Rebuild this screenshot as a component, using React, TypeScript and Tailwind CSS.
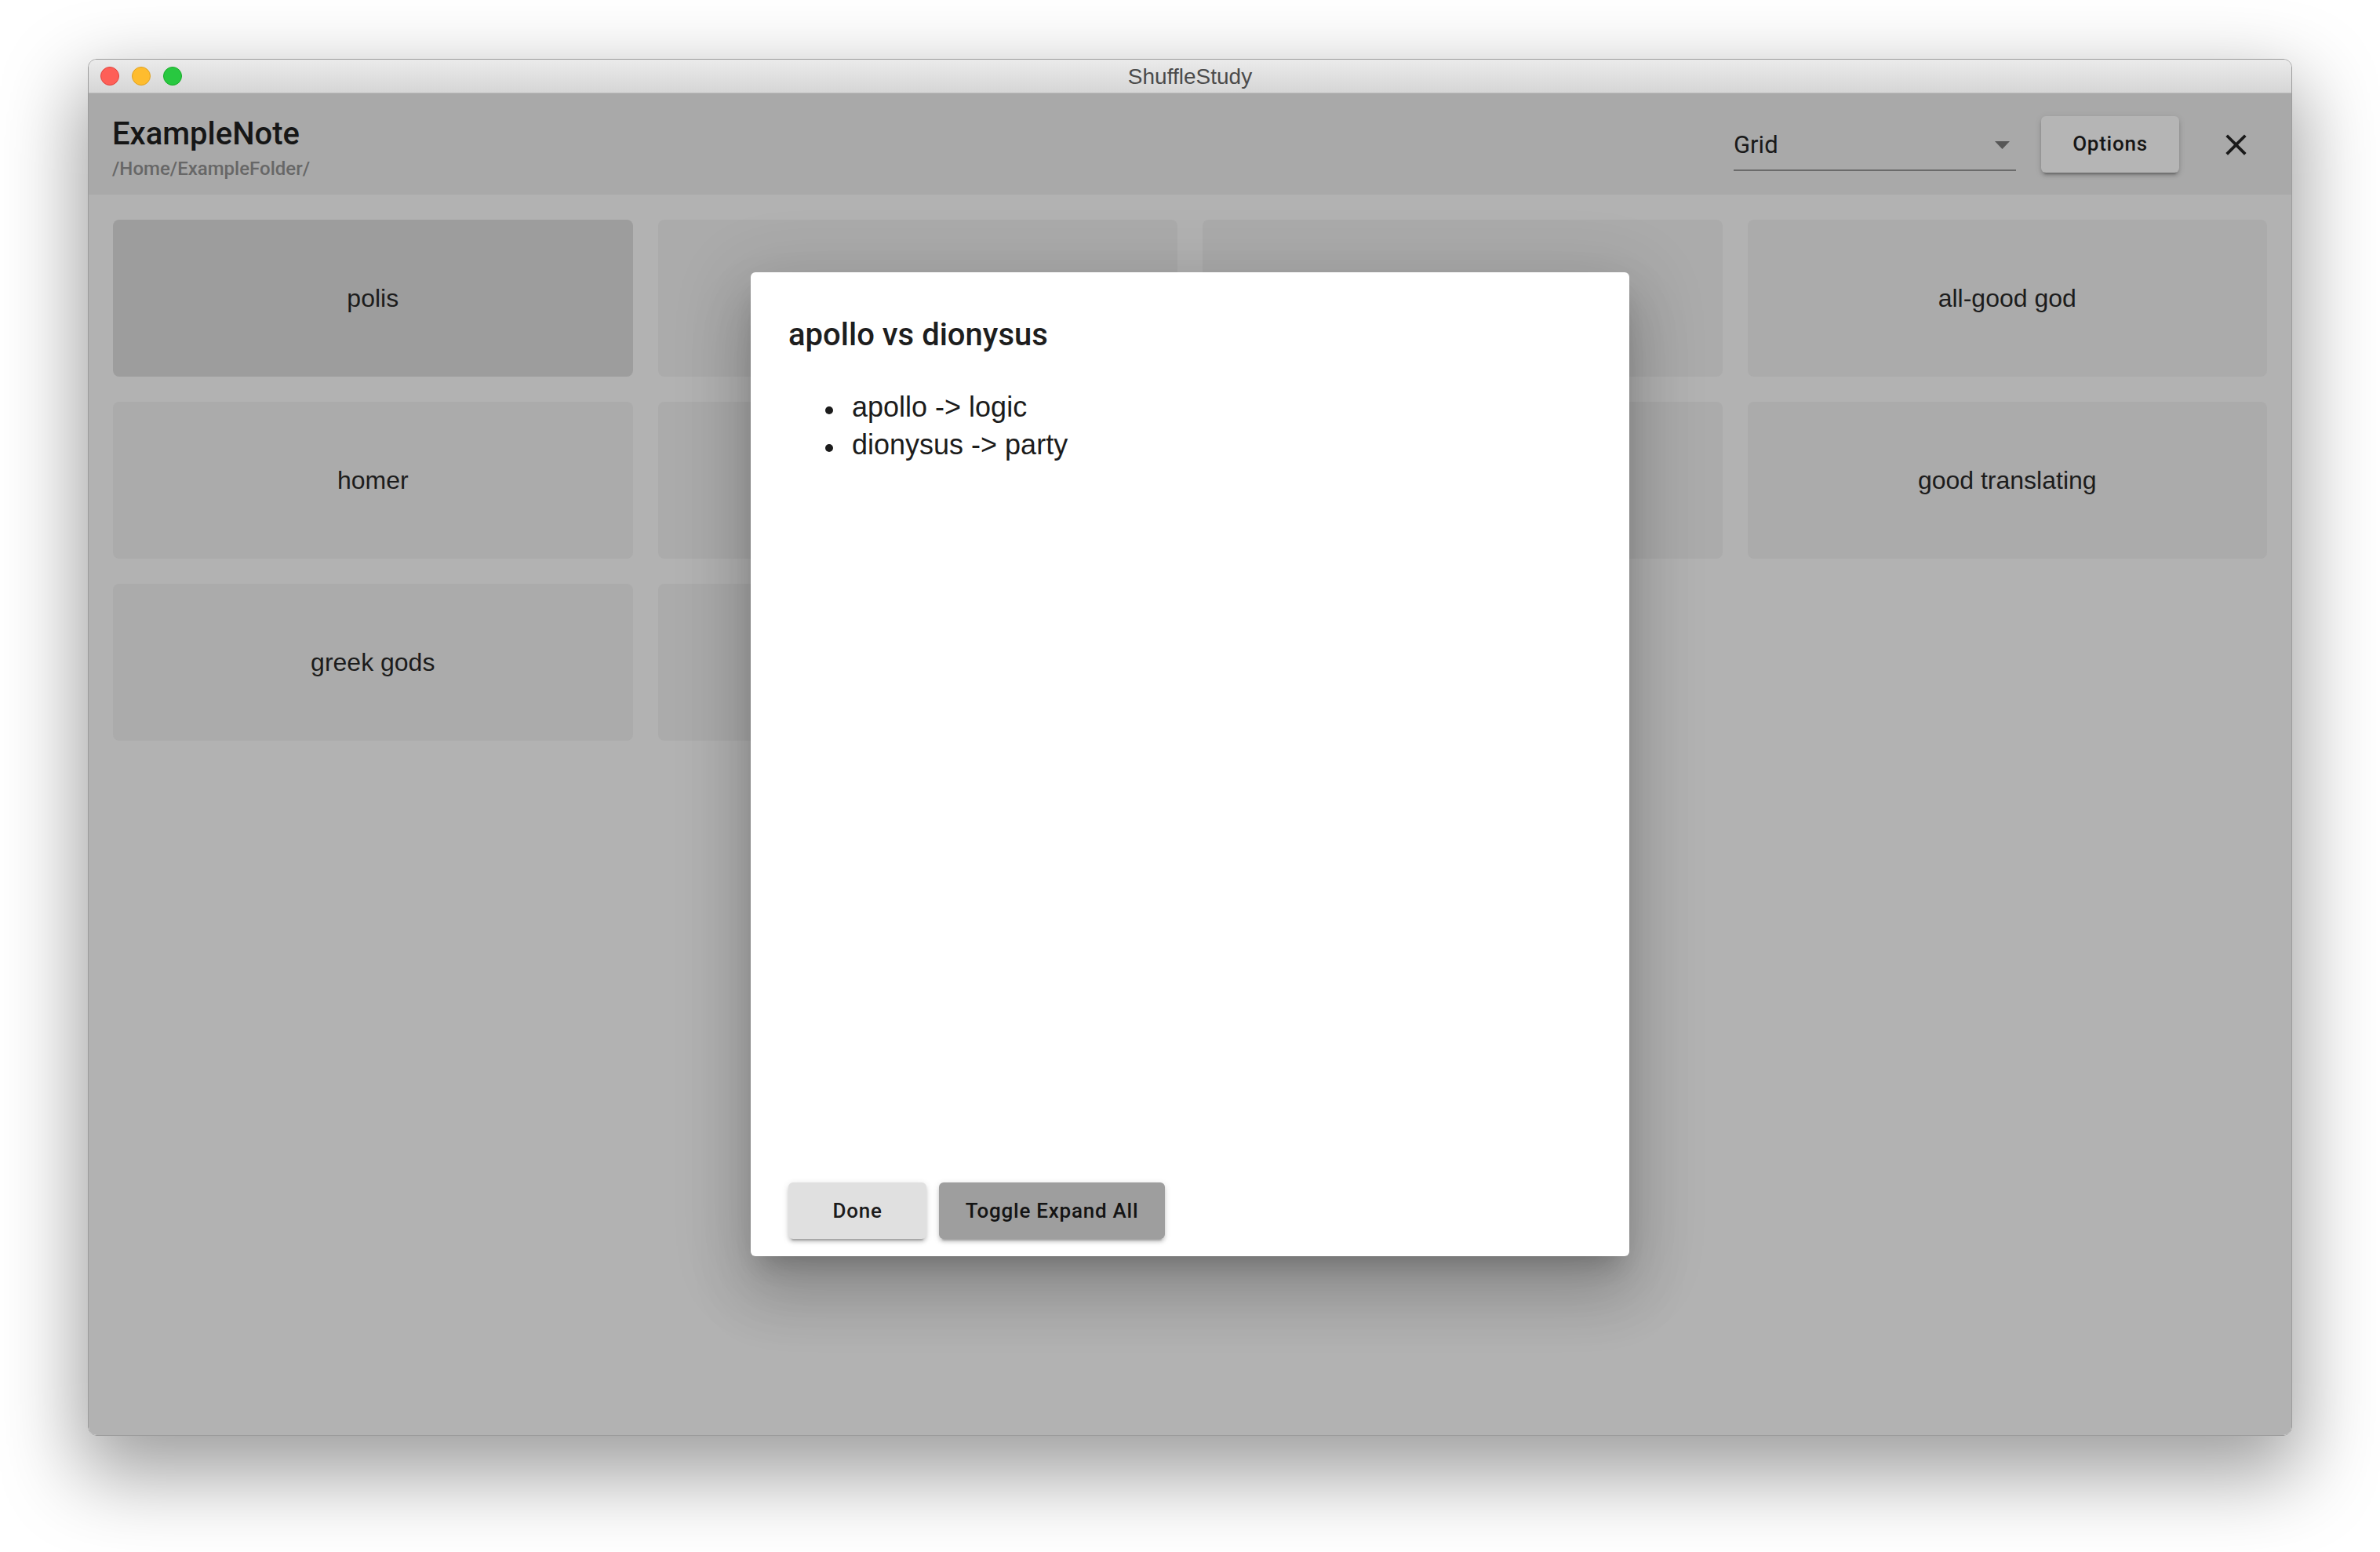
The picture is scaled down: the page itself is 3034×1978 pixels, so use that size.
import React from "react";

const cards: { label: string; active?: boolean }[] = [
  { label: "polis", active: true },
  { label: "apollo vs dionysus" },
  { label: "athens" },
  { label: "all-good god" },
  { label: "homer" },
  { label: "odyssey" },
  { label: "sparta" },
  { label: "good translating" },
  { label: "greek gods" },
  { label: "iliad" },
];

function CloseIcon() {
  return (
    <svg width="45" height="45" viewBox="0 0 24 24" className="fill-[#1a1a1a]">
      <path d="M19 6.41L17.59 5 12 10.59 6.41 5 5 6.41 10.59 12 5 17.59 6.41 19 12 13.41 17.59 19 19 17.59 13.41 12z" />
    </svg>
  );
}

export default function App() {
  return (
    <div className="w-[3034px] h-[1978px] bg-white pt-[75px] pl-[112px]">
      <div className="w-[2810px] h-[1755px] flex flex-col rounded-[11px] overflow-hidden border border-[#9c9c9c] shadow-[0_40px_100px_10px_rgba(0,0,0,0.38)]">
        {/* title bar */}
        <div className="h-[43px] shrink-0 grid grid-cols-[1fr_auto_1fr] items-center bg-gradient-to-b from-[#ebebeb] to-[#d6d6d6] border-b border-[#bcbcbc]">
          <div className="flex items-center gap-[16px] pl-[15px]">
            <span className="w-[24px] h-[24px] rounded-full bg-[#fe5f57] border border-[#e0443e]" />
            <span className="w-[24px] h-[24px] rounded-full bg-[#febc2e] border border-[#dea123]" />
            <span className="w-[24px] h-[24px] rounded-full bg-[#28c840] border border-[#1aab29]" />
          </div>
          <div className="font-['Liberation_Sans',Arial,sans-serif] text-[28px] text-[#4b4b4b] leading-none translate-y-[1px]">
            ShuffleStudy
          </div>
          <div />
        </div>

        {/* content */}
        <div className="relative flex-1 flex flex-col bg-[#b2b2b2] font-['Roboto',sans-serif]">
          <div className="h-[129px] shrink-0 flex justify-between bg-[#a9a9a9] pl-[30px] pr-[48px]">
            <div className="pt-[28px]">
              <div className="text-[40px] leading-[48px] font-medium text-[#161616]">ExampleNote</div>
              <div className="mt-[4px] text-[24px] leading-[32px] font-medium text-[#676767]">
                /Home/ExampleFolder/
              </div>
            </div>
            <div className="flex items-center">
              <div className="w-[360px] h-[72px] flex flex-col justify-end">
                <div className="flex items-center h-[36px] mb-[13px]">
                  <span className="text-[31px] leading-[36px] text-[#1a1a1a]">Grid</span>
                  <svg width="19" height="10" viewBox="0 0 19 10" className="ml-auto mr-[8px] fill-[#575757]">
                    <polygon points="0,0 19,0 9.5,10" />
                  </svg>
                </div>
                <div className="h-[2px] bg-[#6b6b6b] mb-[2px]" />
              </div>
              <button className="ml-[32px] w-[176px] h-[72px] rounded-[6px] bg-[#b5b5b5] text-[26px] font-medium tracking-[0.75px] text-[#161616] shadow-[0_6px_2px_-4px_rgba(0,0,0,0.2),0_4px_4px_0_rgba(0,0,0,0.14),0_2px_10px_0_rgba(0,0,0,0.12)]">
                Options
              </button>
              <div className="ml-[50px] w-[45px] h-[45px] flex items-center justify-center translate-y-[1px]">
                <CloseIcon />
              </div>
            </div>
          </div>

          <div className="grid grid-cols-4 gap-[32px] px-[31px] pt-[32px]">
            {cards.map((c) => (
              <div
                key={c.label}
                className={
                  "h-[200px] rounded-[8px] flex items-center justify-center font-['Liberation_Sans',Arial,sans-serif] text-[32px] text-[#1c1c1c] " +
                  (c.active ? "bg-[#9d9d9d]" : "bg-[#ababab]")
                }
              >
                {c.label}
              </div>
            ))}
          </div>

          {/* dialog */}
          <div className="absolute inset-0 flex items-center justify-center">
            <div className="w-[1120px] h-[1254px] bg-white rounded-[6px] flex flex-col px-[48px] pt-[56px] pb-[22px] shadow-[0_22px_30px_-14px_rgba(0,0,0,0.2),0_48px_76px_6px_rgba(0,0,0,0.14),0_18px_92px_16px_rgba(0,0,0,0.12)]">
              <div className="text-[40px] leading-[48px] font-medium text-[#1e1e1e]">apollo vs dionysus</div>
              <ul className="mt-[44px] font-['Liberation_Sans',Arial,sans-serif] text-[36px] leading-[48px] text-[#1c1c1c]">
                <li className="flex items-center h-[48px]">
                  <span className="ml-[47px] mr-[24px] w-[10px] h-[10px] rounded-full bg-[#1c1c1c] translate-y-[4px]" />
                  apollo -&gt; logic
                </li>
                <li className="flex items-center h-[48px]">
                  <span className="ml-[47px] mr-[24px] w-[10px] h-[10px] rounded-full bg-[#1c1c1c] translate-y-[4px]" />
                  dionysus -&gt; party
                </li>
              </ul>
              <div className="mt-auto flex gap-[16px]">
                <button className="w-[176px] h-[72px] rounded-[6px] bg-[#e0e0e0] text-[26px] font-medium tracking-[0.75px] text-[#1c1c1c] shadow-[0_6px_2px_-4px_rgba(0,0,0,0.2),0_4px_4px_0_rgba(0,0,0,0.14),0_2px_10px_0_rgba(0,0,0,0.12)]">
                  Done
                </button>
                <button className="w-[288px] h-[72px] rounded-[6px] bg-[#9e9e9e] text-[26px] font-medium tracking-[0.75px] text-[#141414] shadow-[0_6px_2px_-4px_rgba(0,0,0,0.2),0_4px_4px_0_rgba(0,0,0,0.14),0_2px_10px_0_rgba(0,0,0,0.12)]">
                  Toggle Expand All
                </button>
              </div>
            </div>
          </div>
        </div>
      </div>
    </div>
  );
}
